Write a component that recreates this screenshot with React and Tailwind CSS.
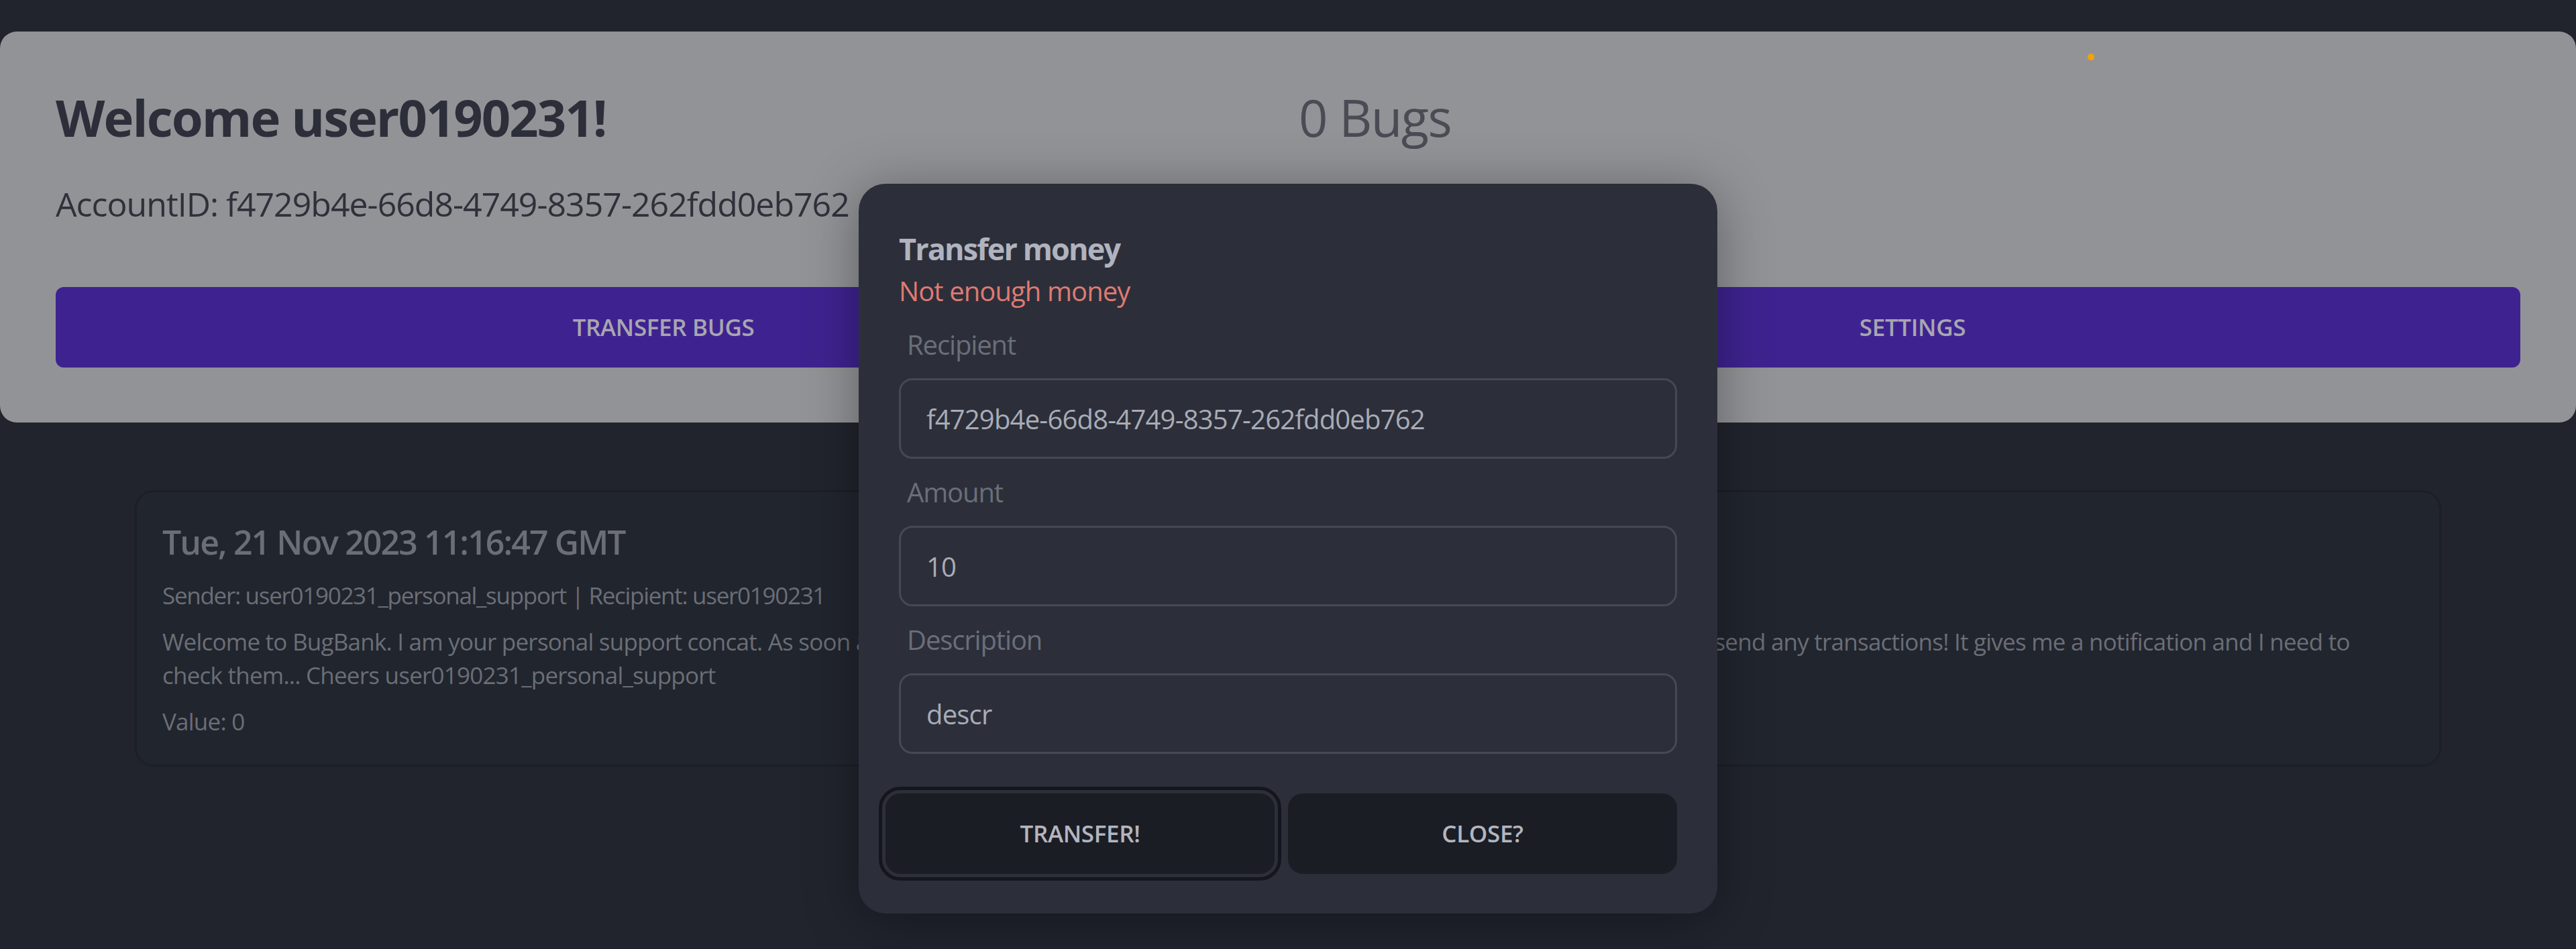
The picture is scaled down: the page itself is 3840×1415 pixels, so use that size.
const fieldClass =
  'h-[120px] w-full rounded-[20px] border-[3px] border-[#454955] bg-[#2c2f3a] px-[38px] text-[40px] tracking-[-0.02em] text-[#a9acb6] outline-none';

const Field = ({ label, value, className = '' }) => (
  <div className={className}>
    <p className="pl-[12px] text-[40px] leading-none tracking-[-0.028em] text-[#6a6e79]">{label}</p>
    <input className={`mt-[30px] ${fieldClass}`} defaultValue={value} />
  </div>
);

const App = () => {
  return (
    <div
      className="relative min-h-[1415px] bg-[#21242d] pt-[47px] tracking-[-0.025em]"
      style={{ fontFamily: '"Open Sans", "Noto Sans", sans-serif' }}
    >
      {/* account header */}
      <section className="relative rounded-[25px] bg-[#929397] px-[83px] pt-[90px] pb-[82px]">
        <span className="absolute left-[3112px] top-[33px] h-[10px] w-[10px] rounded-full bg-[#f5a300]" />
        <div className="flex items-start">
          <div className="w-[1853px]">
            <h1 className="text-[76px] font-bold leading-none tracking-[-0.026em] text-[#2c2f3a]">
              Welcome user0190231!
            </h1>
            <p className="mt-[66px] text-[50px] leading-none tracking-[-0.02em] text-[#2e313a]">
              AccountID: f4729b4e-66d8-4749-8357-262fdd0eb762
            </p>
          </div>
          <p className="text-[76px] leading-none tracking-[-0.02em] text-[#4a4c55]">0 Bugs</p>
        </div>
        <div className="mt-[99px] grid grid-cols-2 gap-[50px]">
          <button className="h-[120px] rounded-[12px] bg-[#3e2390] text-[35px] font-semibold uppercase tracking-[-0.01em] text-[#a8a6b0]">
            Transfer Bugs
          </button>
          <button className="h-[120px] rounded-[12px] bg-[#3e2390] text-[35px] font-semibold uppercase tracking-[-0.01em] text-[#a8a6b0]">
            Settings
          </button>
        </div>
      </section>

      {/* transactions */}
      <div className="px-[201px] pt-[101px]">
        <article className="rounded-[28px] border-[3px] border-[#1c1f27] bg-[#21252e] px-[38px] pt-[49px] pb-[39px]">
          <h2 className="text-[50px] font-semibold leading-none tracking-[-0.038em] text-[#6b6e77]">
            Tue, 21 Nov 2023 11:16:47 GMT
          </h2>
          <p className="mt-[30px] text-[35px] leading-[50px] tracking-[-0.037em] text-[#6b6e76]">
            Sender: user0190231_personal_support | Recipient: user0190231
          </p>
          <p className="mt-[19px] text-[35px] leading-[50px] tracking-[-0.022em] text-[#6b6e76]">
            Welcome to BugBank. I am your personal support concat. As soon as you get any Bugs, please let me know.
            Till then please make sure that you don't send any transactions! It gives me a notification and I need to
            check them... Cheers user0190231_personal_support
          </p>
          <p className="mt-[19px] text-[35px] leading-[50px] tracking-[-0.022em] text-[#6b6e76]">Value: 0</p>
        </article>
      </div>

      {/* transfer dialog */}
      <div className="absolute left-[1280px] top-[274px] w-[1280px] rounded-[40px] bg-[#2c2f3a] pt-[74px] pb-[59px] shadow-[0_10px_80px_rgba(0,0,0,0.35)]">
        <div className="px-[60px]">
          <h3 className="text-[45px] font-bold leading-none tracking-[-0.042em] text-[#b0b3bf]">Transfer money</h3>
          <p className="mt-[21px] text-[40px] leading-none tracking-[-0.023em] text-[#df7a72]">Not enough money</p>
          <Field label="Recipient" value="f4729b4e-66d8-4749-8357-262fdd0eb762" className="mt-[40px]" />
          <Field label="Amount" value="10" className="mt-[30px]" />
          <Field label="Description" value="descr" className="mt-[30px]" />
        </div>
        <div className="mt-[59px] grid grid-cols-2 gap-[20px] pl-[40px] pr-[60px]">
          <button className="h-[120px] rounded-[22px] bg-[#1b1d24] text-[35px] font-semibold uppercase tracking-[-0.01em] text-[#b3b5bf] outline-[5px] outline-offset-[5px] outline-[#15161b] outline-solid">
            Transfer!
          </button>
          <button className="h-[120px] rounded-[22px] bg-[#1b1d24] text-[35px] font-semibold uppercase tracking-[-0.01em] text-[#b3b5bf]">
            Close?
          </button>
        </div>
      </div>
    </div>
  );
};

export default App;
